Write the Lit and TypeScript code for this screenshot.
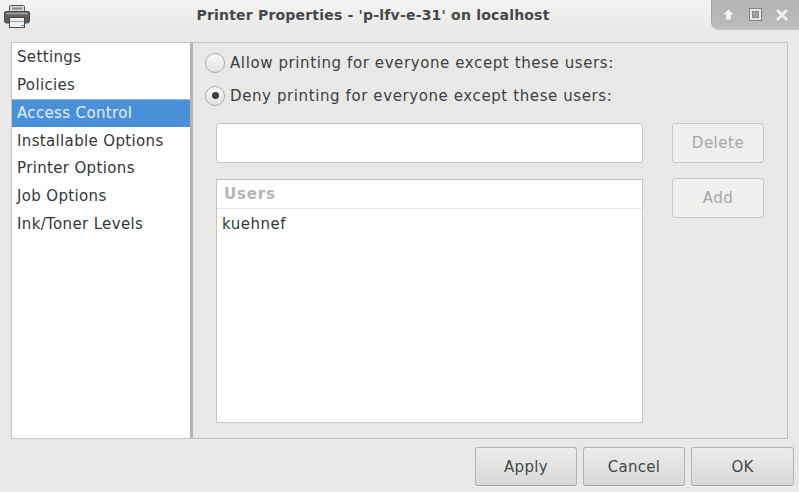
import { LitElement, html, css } from "lit";
import { customElement } from "lit/decorators.js";

const NAV = ["Settings", "Policies", "Access Control", "Installable Options", "Printer Options", "Job Options", "Ink/Toner Levels"];

@customElement("app-root")
export class AppRoot extends LitElement {
  static styles = css`
    :host { display: block; width: 799px; height: 492px; overflow: hidden; background: #e8e8e7; font-family: "DejaVu Sans", sans-serif; font-size: 15px; color: #2e3436; }
    * { box-sizing: border-box; }
    .win { display: flex; flex-direction: column; height: 492px; }
    .titlebar { height: 30px; margin-bottom: 12px; display: flex; align-items: flex-start; background: linear-gradient(#f4f4f3, #e8e8e7); flex: none; }
    .appicon { width: 30px; height: 29px; flex: none; padding: 5px 0 0 4px; }
    .appicon svg { display: block; }
    .title { flex: 1; text-align: center; font-weight: bold; font-size: 14px; letter-spacing: 0.2px; line-height: 31px; color: #45484a; padding-left: 5px; white-space: nowrap; }
    .controls { width: 88px; height: 30px; flex: none; display: flex; align-items: center; padding: 0 10px 0 10px; border-bottom-left-radius: 8px; background: linear-gradient(#b2b2b1, #bcbcbb); border-left: 1px solid #a4a4a3; border-bottom: 1px solid #c4c4c3; justify-content: space-between; }
    .panel { height: 397px; margin: 0 11px; flex: none; display: flex; border: 1px solid #c4c4c2; }
    .side { width: 178px; background: #fff; flex: none; color: #34373a; letter-spacing: 0.35px; }
    .side div { height: 28px; line-height: 29px; padding-left: 5px; white-space: nowrap; }
    .side .sel { background: #4a90d9; color: #e4eefa; border-top: 1px solid #8fb8e4; height: 28px; line-height: 27px; }
    .side .after { margin-top: -1px; line-height: 30px; }
    .side .after ~ div { margin-top: 0; line-height: 28px; }
    .sash { width: 3px; flex: none; background: #b4b4b2; }
    .content { flex: 1; padding: 3px 22px 15px 12px; }
    .radio { display: flex; align-items: center; gap: 5px; height: 33px; white-space: nowrap; color: #3d4143; letter-spacing: 0.6px; }
    .radio span:last-child { padding-top: 1px; }
    .dot { width: 20px; height: 20px; border-radius: 50%; border: 1px solid #a9a9a7; background: linear-gradient(#fafafa, #e2e2e1); display: flex; align-items: center; justify-content: center; flex: none; }
    .dot i { width: 7px; height: 7px; border-radius: 50%; background: #3a3e40; display: block; }
    .grid { display: grid; grid-template-columns: 427px 92px; column-gap: 29px; margin: 11px 0 0 11px; }
    .entry { height: 40px; background: #fff; border: 1px solid #c4c4c2; border-radius: 3px; }
    .list { margin-top: 16px; height: 244px; background: #fff; border: 1px solid #c4c4c2; }
    .head { height: 29px; border-bottom: 1px solid #e8e8e7; padding-left: 7px; font-weight: bold; font-size: 15px; letter-spacing: 0.8px; line-height: 28px; color: #b6b6b4; }
    .user { padding-left: 5px; line-height: 31px; color: #34373a; letter-spacing: 0.5px; }
    .btns { display: flex; flex-direction: column; gap: 15px; }
    .dis { height: 40px; border: 1px solid #c8c8c6; border-radius: 3px; background: #efefee; color: #a6a8a8; display: flex; align-items: center; justify-content: center; letter-spacing: 0.5px; }
    .foot { flex: 1; display: flex; justify-content: flex-end; gap: 6px; padding: 8px 5px 6px 0; }
    .b { width: 102px; height: 39px; border: 1px solid #b4b4b2; border-bottom-color: #a4a4a2; border-radius: 3px; background: linear-gradient(#ebebea, #d9d9d8); color: #45494b; display: flex; align-items: center; justify-content: center; box-shadow: 0 1px 0 #f4f4f3; letter-spacing: 0.3px; }
    .ok { width: 103px; }
  `;

  render() {
    return html`<div class="win">
      <div class="titlebar">
        <div class="appicon">
          <svg width="26" height="24" viewBox="0 0 26 24">
            <rect x="5.500" y="0.500" width="15" height="6" rx="1" fill="#d5d6d4" stroke="#55595a"/>
            <rect x="8" y="2.500" width="10" height="2" fill="#85898a"/>
            <path d="M2 6.500h22a1.500 1.500 0 0 1 1.500 1.500V16a2 2 0 0 1-2 2h-21a2 2 0 0 1-2-2V8A1.500 1.500 0 0 1 2 6.500Z" fill="#5b5f60" stroke="#43474a"/>
            <path d="M2 7.500h22v2H2Z" fill="#9a9e9f"/>
            <rect x="5.500" y="12.500" width="15" height="10" fill="#f0f0ef" stroke="#484c4e"/>
            <rect x="6" y="16" width="14" height="1" fill="#a2a5a6"/>
            <rect x="17" y="20" width="3" height="1" fill="#3d8ee0"/>
          </svg>
        </div>
        <div class="title">Printer Properties - 'p-lfv-e-31' on localhost</div>
        <div class="controls">
          <svg width="13" height="13" viewBox="0 0 14 14"><path d="M7 1.500 12.500 7H9.500v5.500h-5V7H1.500Z" fill="#f4f4f4"/></svg>
          <svg width="13" height="13" viewBox="0 0 13 13"><rect x="0.500" y="0.500" width="12" height="12" fill="none" stroke="#858585"/><rect x="2" y="2" width="9" height="9" fill="none" stroke="#e6e6e6" stroke-width="2"/><rect x="3.500" y="3.500" width="6" height="6" fill="#a4a4a4" stroke="#8a8a8a"/></svg>
          <svg width="14" height="14" viewBox="0 0 14 14"><path d="M2 2 12 12M12 2 2 12" stroke="#f0f0f0" stroke-width="2.800"/></svg>
        </div>
      </div>
      <div class="panel">
        <div class="side">
          ${NAV.map((n, i) => html`<div class=${i === 2 ? "sel" : i === 3 ? "after" : ""}>${n}</div>`)}
        </div>
        <div class="sash"></div>
        <div class="content">
          <div class="radio"><span class="dot"></span><span>Allow printing for everyone except these users:</span></div>
          <div class="radio"><span class="dot"><i></i></span><span>Deny printing for everyone except these users:</span></div>
          <div class="grid">
            <div>
              <div class="entry"></div>
              <div class="list">
                <div class="head">Users</div>
                <div class="user">kuehnef</div>
              </div>
            </div>
            <div class="btns">
              <div class="dis">Delete</div>
              <div class="dis">Add</div>
            </div>
          </div>
        </div>
      </div>
      <div class="foot">
        <div class="b">Apply</div>
        <div class="b">Cancel</div>
        <div class="b ok">OK</div>
      </div>
    </div>`;
  }
}
